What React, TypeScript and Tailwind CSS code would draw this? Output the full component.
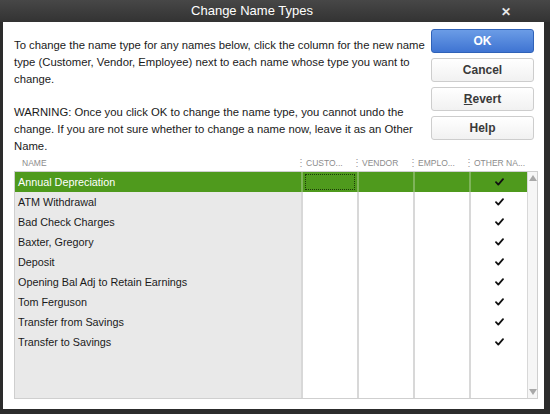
import React from "react";

const NAMES = [
  "Annual Depreciation",
  "ATM Withdrawal",
  "Bad Check Charges",
  "Baxter, Gregory",
  "Deposit",
  "Opening Bal Adj to Retain Earnings",
  "Tom Ferguson",
  "Transfer from Savings",
  "Transfer to Savings",
];

const COLS = "grid grid-cols-[286px_56px_56px_56px_58px]";

function Check() {
  return (
    <svg width="9" height="8" viewBox="0 0 9 8" className="block">
      <path
        d="M1 4.2 L3.3 6.6 L8 1.2"
        fill="none"
        stroke="#111"
        strokeWidth="1.8"
        strokeLinecap="round"
        strokeLinejoin="round"
      />
    </svg>
  );
}

function HeadCell({ label, sep }: { label: string; sep?: boolean }) {
  return (
    <div className="relative flex h-full items-center whitespace-nowrap">
      {sep ? (
        <span className="absolute left-[-4px] top-[2px] text-[10px] leading-none text-[#9a9a9a]">⋮</span>
      ) : null}
      <span className={sep ? "pl-[6px]" : "pl-[8px]"}>{label}</span>
    </div>
  );
}

function DialogButton({ children, primary }: { children: React.ReactNode; primary?: boolean }) {
  return (
    <button
      type="button"
      className={
        primary
          ? "h-[24px] w-[103px] rounded-[3px] border border-[#2f62b8] bg-gradient-to-b from-[#6b9ce6] to-[#3f74d2] text-[12px] font-bold text-white"
          : "h-[24px] w-[103px] rounded-[3px] border border-[#cdcdcd] bg-gradient-to-b from-[#ffffff] to-[#f1f1f1] text-[12px] font-bold text-[#3a3a3a]"
      }
    >
      {children}
    </button>
  );
}

export default function App() {
  return (
    <div
      className="flex h-[414px] w-[550px] flex-col bg-[#2c2c2c] text-[#1a1a1a]"
      style={{ fontFamily: '"Liberation Sans", Arial, sans-serif' }}
    >
      {/* title bar */}
      <div className="relative flex h-[22px] shrink-0 items-center justify-center bg-gradient-to-b from-[#474747] to-[#333333] pr-[46px]">
        <span className="text-[13px] text-white">Change Name Types</span>
        <span className="absolute right-[39px] top-[3px] text-[12px] font-bold text-[#e8e8e8]">✕</span>
      </div>

      {/* body */}
      <div className="mb-[5px] ml-[3px] mr-[6px] flex flex-1 flex-col bg-white">
        <div className="flex h-[134px] shrink-0">
          <div className="w-[424px] whitespace-nowrap pl-[11px] pt-[7px] text-[11.3px] leading-[17px]">
            <p className="pt-[8px]">
              To change the name type for any names below, click the column for the new name
              <br />
              type (Customer, Vendor, Employee) next to each name whose type you want to
              <br />
              change.
            </p>
            <p className="mt-[16px]">
              WARNING: Once you click OK to change the name type, you cannot undo the
              <br />
              change. If you are not sure whether to change a name now, leave it as an Other
              <br />
              Name.
            </p>
          </div>
          <div className="ml-auto mr-[10px] mt-[7px] flex flex-col gap-[5px]">
            <DialogButton primary>OK</DialogButton>
            <DialogButton>Cancel</DialogButton>
            <DialogButton>
              <span className="underline">R</span>evert
            </DialogButton>
            <DialogButton>Help</DialogButton>
          </div>
        </div>

        {/* table */}
        <div className="mb-[10px] ml-[11px] mr-[6px] flex flex-1 flex-col">
          <div className={`${COLS} h-[15px] text-[8.5px] text-[#8c8c8c]`}>
            <HeadCell label="NAME" />
            <HeadCell label="CUSTO..." sep />
            <HeadCell label="VENDOR" sep />
            <HeadCell label="EMPLO..." sep />
            <HeadCell label="OTHER NA..." sep />
          </div>
          <div className="flex flex-1 border border-[#cfcfcf]">
            <div className="flex flex-1 flex-col">
              {NAMES.map((name, i) => {
                const sel = i === 0;
                const line = sel ? "border-[#7fb45a]" : "border-[#d8d8d8]";
                return (
                  <div
                    key={name}
                    className={`${COLS} h-[20px] shrink-0 text-[10.8px] ${sel ? "bg-[#4f9a1d] text-white" : ""}`}
                  >
                    <div className={`flex items-center pl-[3px] ${sel ? "" : "bg-[#e9e9e9]"}`}>{name}</div>
                    <div className={`border-l-2 p-[2px] ${line}`}>
                      {sel ? <div className="h-full w-full border border-dotted border-[#1d3a0a]" /> : null}
                    </div>
                    <div className={`border-l-2 ${line}`} />
                    <div className={`border-l-2 ${line}`} />
                    <div className={`flex items-center justify-center border-l-2 ${line}`}>
                      <Check />
                    </div>
                  </div>
                );
              })}
              <div className={`${COLS} flex-1`}>
                <div className="bg-[#e9e9e9]" />
                <div className="border-l-2 border-[#d8d8d8]" />
                <div className="border-l-2 border-[#d8d8d8]" />
                <div className="border-l-2 border-[#d8d8d8]" />
                <div className="border-l-2 border-[#d8d8d8]" />
              </div>
            </div>
            {/* scrollbar */}
            <div className="flex w-[11px] flex-col items-center justify-between border-l border-[#d8d8d8] bg-[#f6f6f6] py-[3px]">
              <span className="h-0 w-0 border-x-[4px] border-b-[6px] border-x-transparent border-b-[#a8a8a8]" />
              <span className="h-0 w-0 border-x-[4px] border-t-[6px] border-x-transparent border-t-[#a8a8a8]" />
            </div>
          </div>
        </div>
      </div>
    </div>
  );
}
